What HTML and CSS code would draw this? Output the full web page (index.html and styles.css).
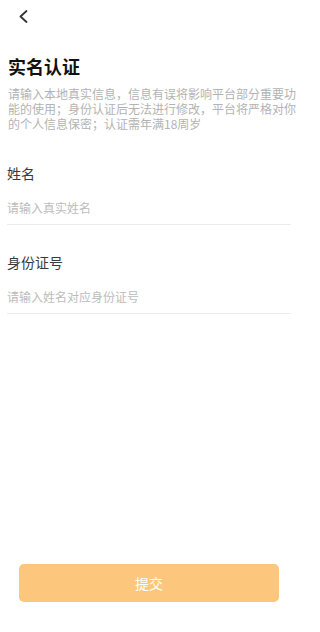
FILE: index.html
```html
<!DOCTYPE html>
<html lang="zh-CN">
<head>
<meta charset="utf-8">
<meta name="viewport" content="width=301">
<title>实名认证</title>
<link rel="stylesheet" href="styles.css">
</head>
<body>
<div class="page">
  <header class="nav">
    <svg class="back" width="14" height="14" viewBox="0 0 14 14" aria-hidden="true">
      <polyline points="9.5,1 3.5,6.5 9.5,12" fill="none" stroke="#333" stroke-width="1.8" stroke-linecap="round" stroke-linejoin="round"/>
    </svg>
  </header>
  <h1 class="title">实名认证</h1>
  <p class="desc">请输入本地真实信息，信息有误将影响平台部分重要功能的使用；身份认证后无法进行修改，平台将严格对你的个人信息保密；认证需年满18周岁</p>
  <div class="field">
    <div class="label">姓名</div>
    <div class="input">请输入真实姓名</div>
  </div>
  <div class="field field-second">
    <div class="label">身份证号</div>
    <div class="input">请输入姓名对应身份证号</div>
  </div>
  <div class="spacer"></div>
  <button class="submit">提交</button>
</div>
</body>
</html>
```

FILE: styles.css
```css
html, body {
  margin: 0;
  padding: 0;
  background: #ffffff;
}
body {
  font-family: "Noto Sans CJK SC", "Noto Sans", sans-serif;
  width: 301px;
  overflow: hidden;
}
.page {
  display: flex;
  flex-direction: column;
  width: 301px;
  min-height: 632px;
  padding: 0 10px 0 7px;
  box-sizing: border-box;
}
.nav {
  height: 34px;
  display: flex;
  align-items: center;
  padding-left: 10px;
}
.back {
  display: block;
}
.title {
  margin: 20px 0 0 0;
  font-size: 18px;
  line-height: 24px;
  font-weight: 700;
  color: #111;
  padding-left: 1px;
}
.desc {
  margin: 8px -8px 0 1px;
  font-size: 12px;
  line-height: 15px;
  color: #b3b3b3;
}
.field {
  margin-top: 32px;
  border-bottom: 1px solid #ececec;
}
.field-second {
  margin-top: 27px;
}
.label {
  font-size: 14px;
  line-height: 20px;
  color: #3a3a3a;
  margin-bottom: 9px;
}
.input {
  height: 32px;
  line-height: 32px;
  font-size: 12px;
  color: #bcbcbc;
}
.spacer {
  flex: 1;
}
.submit {
  margin: 0 12px 30px 12px;
  height: 38px;
  border: none;
  border-radius: 5px;
  background: #fcc67d;
  color: #ffffff;
  font-family: "Noto Sans CJK SC", "Noto Sans", sans-serif;
  font-size: 14px;
  padding: 0;
}
```
